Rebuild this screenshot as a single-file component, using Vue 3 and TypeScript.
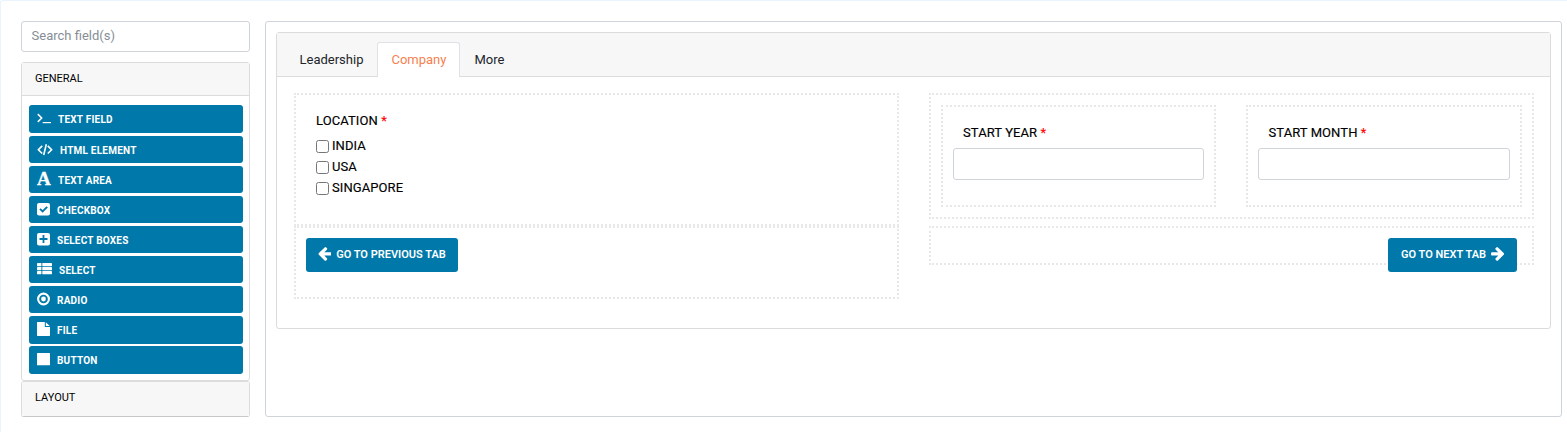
<script setup lang="ts">
import { ref } from 'vue'

interface FieldType {
  label: string
  icon: string
  width: number
}

const fields: FieldType[] = [
  { label: 'TEXT FIELD', icon: 'terminal', width: 14 },
  { label: 'HTML ELEMENT', icon: 'code', width: 16 },
  { label: 'TEXT AREA', icon: 'font', width: 14 },
  { label: 'CHECKBOX', icon: 'check', width: 13 },
  { label: 'SELECT BOXES', icon: 'plus', width: 13 },
  { label: 'SELECT', icon: 'list', width: 15 },
  { label: 'RADIO', icon: 'radio', width: 13 },
  { label: 'FILE', icon: 'file', width: 13 },
  { label: 'BUTTON', icon: 'stop', width: 13 },
]

const tabs = ['Leadership', 'Company', 'More']
const activeTab = ref('Company')
const locations = ['INDIA', 'USA', 'SINGAPORE']
</script>

<template>
  <div class="page">
    <aside class="sidebar">
      <input class="search" type="text" placeholder="Search field(s)" />
      <section class="group">
        <header class="group-head">GENERAL</header>
        <div class="group-body">
          <button v-for="f in fields" :key="f.label" class="field" type="button">
            <span v-if="f.icon === 'font'" class="letter">A</span>
            <svg v-else class="icon" :width="f.width" height="15" :viewBox="`0 0 ${f.width} 15`">
              <g v-if="f.icon === 'terminal'" fill="none" stroke="#fff" stroke-width="1.5">
                <path d="M.8 3.1 4.7 7 .8 10.9" />
                <path d="M5.7 11.6H14" stroke-width="1.2" />
              </g>
              <g v-else-if="f.icon === 'code'" fill="none" stroke="#fff" stroke-width="1.6">
                <path d="M5.2 3.9 1.4 7.7 5.2 11.5M10.8 3.9l3.8 3.8-3.8 3.8M9.3 2.2 6.7 13" />
              </g>
              <g v-else-if="f.icon === 'check'">
                <rect y="1" width="13" height="12.4" rx="2" fill="#fff" />
                <path d="M3 6.9 5.6 9.5 10.2 4.8" fill="none" stroke="#0079aa" stroke-width="1.9" />
              </g>
              <g v-else-if="f.icon === 'plus'">
                <rect y="1" width="13" height="12.4" rx="2" fill="#fff" />
                <path d="M2.5 7h8M6.5 3v8" stroke="#0079aa" stroke-width="1.8" />
              </g>
              <g v-else-if="f.icon === 'list'" fill="#fff">
                <rect y="1" width="4.4" height="3.2" rx=".4" /><rect x="5.3" y="1" width="9.7" height="3.2" rx=".4" />
                <rect y="5" width="4.4" height="3.2" rx=".4" /><rect x="5.3" y="5" width="9.7" height="3.2" rx=".4" />
                <rect y="9" width="4.4" height="3.2" rx=".4" /><rect x="5.3" y="9" width="9.7" height="3.2" rx=".4" />
              </g>
              <g v-else-if="f.icon === 'radio'">
                <circle cx="6.5" cy="7" r="5.4" fill="none" stroke="#fff" stroke-width="2.1" />
                <circle cx="6.5" cy="7" r="2.4" fill="#fff" />
              </g>
              <path v-else-if="f.icon === 'file'" fill="#fff" d="M.7 0H7.8V4.4q0 .6.6.6H13v8.3q0 .7-.7.7H.7q-.7 0-.7-.7V.7Q0 0 .7 0zM8.8.2 12.8 4H8.8z" />
              <rect v-else y="1" width="13" height="12.2" rx=".5" fill="#fff" />
            </svg>
            <span class="field-label">{{ f.label }}</span>
          </button>
        </div>
      </section>
      <section class="group closed">
        <header class="group-head">LAYOUT</header>
      </section>
    </aside>

    <main class="canvas">
      <div class="card">
        <nav class="tabs">
          <a v-for="t in tabs" :key="t" class="tab" :class="{ active: t === activeTab }" @click="activeTab = t">{{ t }}</a>
        </nav>
        <div class="columns">
          <div class="column">
            <div class="zone location">
              <div class="label">LOCATION <span class="star">*</span></div>
              <label v-for="l in locations" :key="l" class="option"><input type="checkbox" /><span>{{ l }}</span></label>
            </div>
            <div class="zone previous">
              <button class="action" type="button">
                <svg width="13" height="14" viewBox="128 190 1480 1560"><path fill="#fff" d="M1664 896v128q0 53-32.5 90.5t-84.5 37.5h-704l293 294q38 36 38 90t-38 90l-75 76q-37 37-90 37-52 0-91-37l-651-652q-37-37-37-90 0-52 37-91l651-650q38-38 91-38 52 0 90 38l75 74q38 38 38 91t-38 91l-293 293h704q52 0 84.5 37.5t32.5 90.5z" /></svg>
                <span>GO TO PREVIOUS TAB</span>
              </button>
            </div>
          </div>
          <div class="column">
            <div class="zone dates">
              <div class="zone date year">
                <div class="label">START YEAR <span class="star">*</span></div>
                <input class="text-input" type="text" />
              </div>
              <div class="zone date month">
                <div class="label">START MONTH <span class="star">*</span></div>
                <input class="text-input" type="text" />
              </div>
            </div>
            <div class="zone next">
              <button class="action" type="button">
                <span>GO TO NEXT TAB</span>
                <svg width="13" height="14" viewBox="120 190 1480 1560"><path fill="#fff" d="M1600 960q0 54-37 91l-651 651q-39 37-91 37-51 0-90-37l-75-75q-38-38-38-91t38-91l293-293h-704q-52 0-84.5-37.5t-32.5-90.5v-128q0-53 32.5-90.5t84.5-37.5h704l-293-294q-38-36-38-90t38-90l75-75q38-38 90-38 53 0 91 38l651 651q37 35 37 90z" /></svg>
              </button>
            </div>
          </div>
        </div>
      </div>
    </main>
  </div>
</template>

<style>
body {
  background: #fff;
  overflow: hidden;
}
</style>

<style scoped>
* {
  box-sizing: border-box;
}
.page {
  height: 432px;
  display: flex;
  gap: 15px;
  padding: 20px 5px 0 20px;
  background: #fff;
  border: solid #e9f4ff;
  border-width: 1px 0 0 1px;
  border-top-left-radius: 3px;
  font-family: Roboto, sans-serif;
  font-size: 13px;
  color: #000;
}
button,
input {
  font-family: inherit;
}
.sidebar {
  width: 229px;
  flex: none;
}
.search {
  display: block;
  width: 229px;
  height: 31px;
  padding: 0 10px 2px 9.6px;
  border: 1px solid #ced4da;
  border-radius: 3px;
  font-size: 13px;
  outline: none;
}
.search::placeholder {
  color: #868e96;
}
.group {
  margin-top: 10px;
  height: 319px;
  border: 1px solid #dcdcdc;
  border-radius: 3px;
}
.group.closed {
  margin-top: 0;
  height: 36px;
  border-bottom-color: #c8c8c8;
}
.group-head {
  height: 33px;
  padding-left: 13px;
  line-height: 31px;
  font-size: 11px;
  color: #000;
  background: #f7f7f7;
  border-bottom: 1px solid #dcdcdc;
}
.closed .group-head {
  height: 34px;
  border-bottom: 0;
}
.group-body {
  display: flex;
  flex-direction: column;
  gap: 2.66px;
  padding: 9.44px 6px 0 7px;
}
.field {
  flex: none;
  display: flex;
  align-items: flex-start;
  gap: 7px;
  height: 27.45px;
  padding: 6px 8px 0;
  border: 0;
  border-radius: 3px;
  background: #0079aa;
  color: #fff;
  text-align: left;
}
.icon {
  flex: none;
  display: block;
}
.letter {
  width: 14px;
  font: bold 19px/14px 'Liberation Serif', serif;
  -webkit-text-stroke: 0.3px #fff;
}
.field-label {
  font-size: 10px;
  font-weight: 700;
  line-height: 17px;
  letter-spacing: 0.22px;
}
.canvas {
  width: 1297px;
  height: 396px;
  flex: none;
  padding: 10px;
  border: 1px solid #ced4da;
  border-radius: 3px;
}
.card {
  height: 297px;
  border: 1px solid #dcdcdc;
  border-radius: 3px;
}
.tabs {
  display: flex;
  align-items: flex-end;
  height: 44px;
  padding-left: 8.5px;
  background: #f7f7f7;
  border-bottom: 1px solid #dcdcdc;
}
.tab {
  height: 35px;
  margin-bottom: -1px;
  padding: 0 13px;
  border: 1px solid transparent;
  border-bottom: 0;
  border-radius: 3px 3px 0 0;
  line-height: 34px;
  color: #212529;
}
.tab.active {
  background: #fff;
  border-color: #dee2e6;
  color: #f47f51;
}
.columns {
  display: flex;
  gap: 30px;
  padding: 16px 16px 0 17px;
}
.column {
  width: 605px;
}
.zone {
  border: 2px dotted #e8e8e8;
}
.label,
.option {
  font-size: 13px;
  letter-spacing: 0.08px;
  -webkit-text-stroke: 0.15px currentColor;
}
.label {
  line-height: 18px;
}
.star {
  color: #f00;
}
.location {
  height: 133px;
  padding: 17px 20px 0;
}
.location .label {
  margin-bottom: 5px;
}
.option {
  display: flex;
  gap: 3px;
  height: 21px;
  line-height: 21px;
}
.option input {
  width: 13px;
  height: 13px;
  margin: 5px 0 0;
}
.previous {
  height: 73px;
  padding: 10px;
}
.action {
  display: flex;
  align-items: center;
  justify-content: center;
  gap: 5px;
  height: 34px;
  padding: 0 0 2px;
  border: 0;
  border-radius: 3px;
  background: #0079aa;
  color: #fff;
  font-size: 11px;
  font-weight: 600;
}
.action span {
  padding-top: 1px;
}
.previous .action {
  width: 152px;
}
.next .action {
  width: 129px;
}
.dates {
  display: flex;
  gap: 30px;
  height: 126px;
  padding: 10px;
}
.date {
  width: 276px;
  height: 102px;
  padding: 17px 10px 0;
}
.date.year {
  width: 275px;
}
.date .label {
  padding-left: 10px;
  margin-bottom: 6px;
}
.date.month .label {
  padding-left: 10.5px;
}
.text-input {
  display: block;
  width: 100%;
  height: 32px;
  border: 1px solid #ced4da;
  border-radius: 3px;
  outline: none;
}
.next {
  display: flex;
  justify-content: flex-end;
  height: 39px;
  margin-top: 7px;
  padding: 10px 15px 0;
}
</style>
